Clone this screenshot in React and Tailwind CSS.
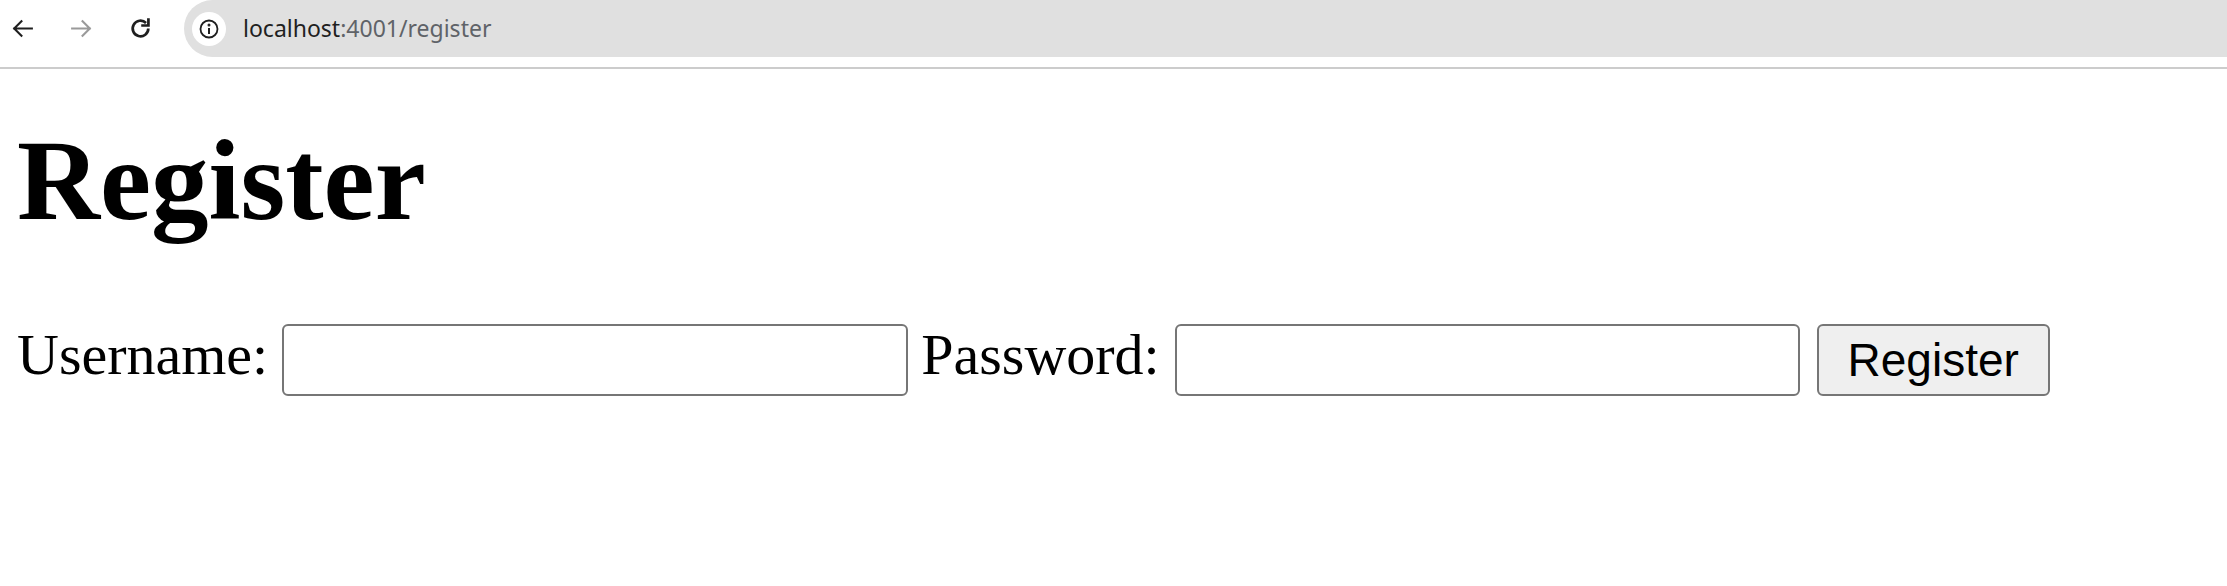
export default function App() {
  return (
    <div className="w-[2227px] h-[586px] bg-white overflow-hidden">
      {/* browser chrome */}
      <div className="h-[67px] flex items-start bg-white">
        <div className="h-[57px] flex items-center pl-[10px]">
          <svg width="25" height="25" viewBox="0 0 24 24" fill="none" stroke="#1f1f1f" strokeWidth="2" strokeLinecap="square">
            <path d="M21 12H4M11 5l-7 7 7 7" />
          </svg>
          <svg className="ml-[34px]" width="25" height="25" viewBox="0 0 24 24" fill="none" stroke="#9a9a9a" strokeWidth="2" strokeLinecap="square">
            <path d="M3 12h17M13 5l7 7-7 7" />
          </svg>
          <svg className="ml-[34px]" width="25" height="25" viewBox="0 0 24 24" fill="none" stroke="#1f1f1f" strokeWidth="2.6">
            <path d="M19.5 12a7.5 7.5 0 1 1-2.2-5.3" />
            <path d="M19.6 3.5v5.6H14" strokeLinecap="square" strokeLinejoin="miter" />
          </svg>
        </div>
        <div className="ml-[31px] flex-1 h-[57px] bg-[#e0e0e0] rounded-l-[30px] flex items-center pl-[8px]">
          <div className="w-[34px] h-[34px] rounded-full bg-white flex items-center justify-center">
            <svg width="22" height="22" viewBox="0 0 22 22" fill="none" stroke="#1f1f1f" strokeWidth="1.8">
              <circle cx="11" cy="11" r="8.5" />
              <path d="M11 10v6" strokeWidth="2" />
              <circle cx="11" cy="7" r="0.6" fill="#1f1f1f" />
            </svg>
          </div>
          <div className="ml-[17px] text-[23px] font-['Noto_Sans',sans-serif] leading-none">
            <span className="text-[#1f1f1f]">localhost</span>
            <span className="text-[#5f6368]">:4001/register</span>
          </div>
        </div>
      </div>
      <div className="h-[2px] bg-[#cccccc]" />

      {/* page */}
      <div className="pl-[17px] font-['Liberation_Serif',serif] text-black">
        <h1 className="mt-[48px] text-[115px] leading-[127px] font-bold">Register</h1>
        <form className="mt-[79px] flex items-start" onSubmit={(e) => e.preventDefault()}>
          <label className="text-[58px] leading-[64px]">Username:</label>
          <input
            type="text"
            className="ml-[14px] mt-[1px] w-[626px] h-[72px] border-2 border-[#767676] rounded-[6px] bg-white"
          />
          <label className="ml-[13px] text-[58px] leading-[64px]">Password:</label>
          <input
            type="password"
            className="ml-[15px] mt-[1px] w-[625px] h-[72px] border-2 border-[#767676] rounded-[6px] bg-white"
          />
          <button
            type="submit"
            className="ml-[17px] mt-[1px] w-[233px] h-[72px] border-2 border-[#767676] rounded-[6px] bg-[#efefef] font-['Liberation_Sans',sans-serif] text-[46px] leading-none text-black"
          >
            Register
          </button>
        </form>
      </div>
    </div>
  )
}
